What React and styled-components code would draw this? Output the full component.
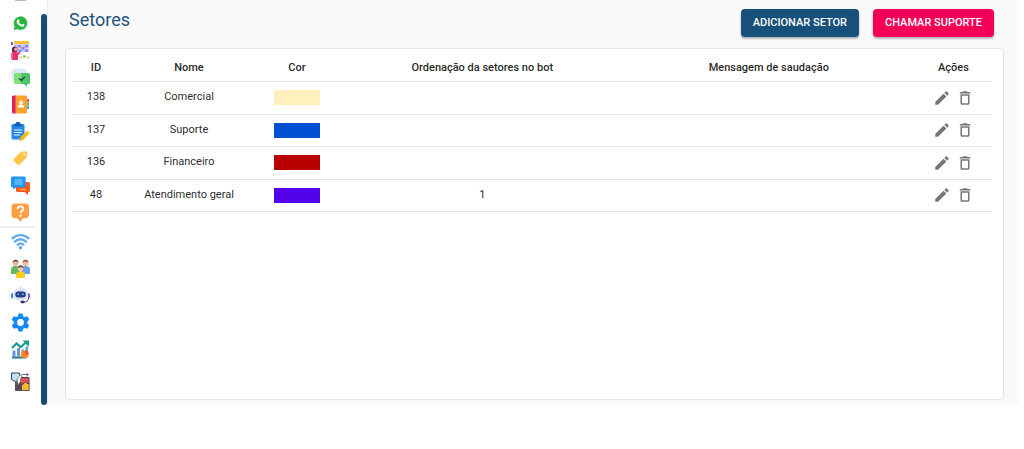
import React from "react";
import styled, { createGlobalStyle } from "styled-components";
import { MdEdit, MdDeleteOutline } from "react-icons/md";

const GlobalStyle = createGlobalStyle`
  *, *::before, *::after { box-sizing: border-box; }
  body {
    margin: 0;
    background: #fff;
    color: rgba(0, 0, 0, 0.87);
    font-family: Roboto, "Liberation Sans", sans-serif;
    font-size: 11px;
    line-height: 16px;
  }
`;

const Shell = styled.div`
  display: flex;
  min-height: calc(100vh - 44px);
  margin-right: 5px;
`;

const Sidebar = styled.aside`
  display: flex;
  flex: none;
  width: 48px;
  border-right: 1px solid #ececec;
`;

const Nav = styled.nav`
  flex: 1;
`;

const NavLink = styled.a`
  display: flex;
  align-items: center;
  height: ${(p) => (p.$tall ? 36 : 27)}px;
  padding-left: 11px;
`;

const Clipped = styled.div`
  display: flex;
  height: 10px;
  padding-left: 15px;

  &::before {
    content: "";
    width: 11px;
    height: 1px;
    background: #b4b8c4;
  }
`;

const Divider = styled.hr`
  height: 2px;
  margin: 0 6px 0 0;
  border: 0;
  background: #ececec;
`;

const ScrollThumb = styled.span`
  flex: none;
  width: 6px;
  margin-top: 14px;
  border-radius: 3px;
  background: #164d72;
`;

const Main = styled.main`
  display: flex;
  flex: 1;
  flex-direction: column;
  gap: 10px;
  min-width: 0;
  padding: 9px 15px 5px 17px;
  background: #fafafa;
`;

const Header = styled.header`
  display: flex;
  justify-content: space-between;
  height: 29px;
  padding: 0 10px 0 4px;
`;

const Title = styled.h1`
  margin: 0;
  color: #1a5480;
  font-size: 18px;
  font-weight: 400;
  line-height: 22px;
`;

const Actions = styled.div`
  display: flex;
  gap: 14px;
`;

const Button = styled.button`
  height: 28px;
  padding: 0 12px;
  border: 0;
  border-radius: 4px;
  background: ${(p) => (p.$accent ? "#f50057" : "#17507a")};
  box-shadow: 0 2px 2px rgba(0, 0, 0, 0.2), 0 1px 3px rgba(0, 0, 0, 0.14);
  color: #fff;
  font: 500 11px/16px Roboto, "Liberation Sans", sans-serif;
  text-transform: uppercase;
  white-space: nowrap;
  cursor: pointer;
`;

const Card = styled.section`
  flex: 1;
  padding: 6px 11px 6px 6px;
  border: 1px solid #e4e4e4;
  border-radius: 4px;
  background: #fff;
`;

const Table = styled.table`
  width: 100%;
  border-collapse: separate;
  border-spacing: 0;
  table-layout: fixed;
  text-align: center;
`;

const Th = styled.th`
  width: ${(p) => (p.$width ? `${p.$width}px` : "auto")};
  height: 27px;
  padding: 0 11px 0 5px;
  border-bottom: 1px solid #e0e0e0;
  font-weight: 500;
  white-space: nowrap;

  &:last-child { padding: 0 4px; }
`;

const Row = styled.tr`
  height: 33px;

  &:nth-child(even) { height: 32px; }
`;

const Td = styled.td`
  padding: 0 11px 2px 5px;
  border-bottom: 1px solid #e0e0e0;
  white-space: nowrap;

  &:last-child { padding: 0 4px 1px; }
`;

const Swatch = styled.span`
  display: block;
  width: 46px;
  height: 15px;
  margin: 1px auto 0;
  background: ${(p) => p.$color};
`;

const RowActions = styled.div`
  display: flex;
  justify-content: center;
  gap: 5px;
`;

const IconButton = styled.button`
  display: flex;
  padding: 0;
  border: 0;
  background: none;
  color: #757575;
  font-size: 18px;
  cursor: pointer;
`;

const Icon = ({ children }) => (
  <svg width="19" height="19" viewBox="0 0 19 19" aria-hidden="true">
    {children}
  </svg>
);

const WhatsApp = () => (
  <Icon>
    <path d="M2 16.500l1.100-3.800A7.200 7.200 0 1 1 6 15.600z" fill="#d8dcd9" />
    <path d="M2.800 15.800l1-3.400a6.600 6.600 0 1 1 2.500 2.500z" fill="#25b83d" />
    <path d="M6.800 5.600c.5-.5 1-.3 1.200.2l.6 1.300c.1.400-.6 1-.7 1.200.6 1.200 1.500 2 2.700 2.500.4-.2.8-1.100 1.200-1l1.500.7c.4.300.1 1.400-.4 1.800-.8.700-2.100.6-3.700-.2-1.800-.9-3.300-2.800-3.500-4.200-.1-1 .5-1.800 1.100-2.300z" fill="#fff" />
  </Icon>
);

const Planning = () => (
  <Icon>
    <path d="M3 1h15v10H3z" fill="#cfcbf6" />
    <path d="M3 0h15v3H3z" fill="#fbc02d" />
    <path d="M7 4h3v2.500H7zM14 4h3v2.500h-3zM10.500 6h3v2.500h-3zM7.500 8.500h3V11h-3zM14 8.500h3V11h-3z" fill="#8c84e0" />
    <path d="M0 1h2v3H0z" fill="#5b6be0" />
    <path d="M1 7.500C1 5 6 4.500 6.500 7.500L6 11H1z" fill="#4b2a55" />
    <circle cx="4.800" cy="8.300" r="1.700" fill="#f6a58c" />
    <path d="M1 11.500c1.500-1.300 4-1.300 5 .3l2.800-1 .6 1.500L7 14.200v4.800H1z" fill="#ec2f6e" />
    <path d="M0 12h2v6H0z" fill="#f06292" />
    <circle cx="10" cy="16.500" r="1" fill="#f9b233" />
    <circle cx="13.300" cy="15.500" r="1.300" fill="#67bb55" />
    <circle cx="17" cy="16.500" r="1" fill="#f9b233" />
  </Icon>
);

const ChatCheck = () => (
  <Icon>
    <path d="M2.500.5h10A2.500 2.500 0 0 1 15 3v8H4l-3 2V9L0 5z" fill="#dce9fb" />
    <path d="M4.500 5H11v11H4.500A1.500 1.500 0 0 1 3 14.500v-8A1.500 1.500 0 0 1 4.500 5z" fill="#7fe07a" />
    <path d="M10 5h7.500A1.500 1.500 0 0 1 19 6.500v8a1.500 1.500 0 0 1-1.500 1.500H16v2.500L12.500 16H10z" fill="#4cc46b" />
    <path d="M8 10.500l2.200 1.800L13.800 9" fill="none" stroke="#1e4631" strokeWidth="1.500" />
  </Icon>
);

const Contacts = () => (
  <Icon>
    <path d="M15 4h3v3h-3z" fill="#ef5350" />
    <path d="M15 7.500h3v3h-3z" fill="#43b883" />
    <path d="M15 11h3v3h-3z" fill="#42a5f5" />
    <path d="M4 .5h10.500A1.500 1.500 0 0 1 16 2v15a1.500 1.500 0 0 1-1.500 1.500H4z" fill="#ffa12f" />
    <path d="M2.500.5h2v18h-2A1.500 1.500 0 0 1 1 17V2A1.500 1.500 0 0 1 2.500.5z" fill="#dc1f62" />
    <circle cx="10" cy="7.500" r="1.900" fill="#fff" />
    <path d="M7 12.500V11l2-1.500h2l2 1.500v1.500z" fill="#fff" />
  </Icon>
);

const ClipboardEdit = () => (
  <Icon>
    <rect x=".5" y="2" width="13" height="15.500" rx="1.500" fill="#2689ea" />
    <path d="M3.500 1.500H5a2 2 0 0 1 4 0h1.500v3h-7z" fill="#1260b8" />
    <path d="M3 8h8M3 10.500h8M3 13h6" stroke="#e3f1ff" strokeWidth="1.200" />
    <path d="M15.500 9l3 2.500-6.500 6.500-3.500 1 .8-3.500z" fill="#fbb912" />
    <path d="M16.500 8.500l2.500 2-1 1.200-2.600-2.200z" fill="#ffd65a" />
  </Icon>
);

const Tag = () => (
  <Icon>
    <path d="M10 2.800L14.500 2.200A1.500 1.500 0 0 1 16.200 4l-.6 4.400-7 7.200a1.500 1.500 0 0 1-2.200 0L2.800 12a1.500 1.500 0 0 1 0-2.100z" fill="#fcc543" />
    <circle cx="13.300" cy="5.200" r="1.100" fill="#fff" />
  </Icon>
);

const Conversations = () => (
  <Icon>
    <path d="M8 6h9.500A1.500 1.500 0 0 1 19 7.500v7a1.500 1.500 0 0 1-1.500 1.500H17v3L13.500 16H6.500A1.500 1.500 0 0 1 5 14.500V9z" fill="#fb5a1c" />
    <path d="M2 .5h11a1.700 1.700 0 0 1 1.700 1.700v7.300a1.700 1.700 0 0 1-1.700 1.700H5.500L2 13.500v-2.300A1.700 1.700 0 0 1 0 9.500V2.200A1.700 1.700 0 0 1 2 .5z" fill="#1e96f7" />
    <path d="M3.500 4h8M3.500 6h8M3.500 8h8" stroke="#8fd2ff" strokeWidth="1" />
    <path d="M8 13.500h7" stroke="#ffb03d" strokeWidth="1.300" />
  </Icon>
);

const Help = () => (
  <Icon>
    <path d="M4 .5h10.500A3.800 3.800 0 0 1 18 4.300v7.200a3.800 3.800 0 0 1-3.500 3.800H12l-2.700 3.500-2.700-3.500H4A3.800 3.800 0 0 1 .5 11.500V4.300A3.800 3.800 0 0 1 4 .5z" fill="#ff9f43" />
    <path d="M6.500 6.200c.1-3.800 5.800-3.600 5.800-.3 0 2-2.700 2-2.700 4.400" fill="none" stroke="#fff" strokeWidth="1.900" />
    <circle cx="9.500" cy="12.800" r="1.200" fill="#fff" />
  </Icon>
);

const Wifi = () => (
  <Icon>
    <path d="M1.500 6.300c4.500-4.300 11.500-4.300 16 0M4 9.700c3.200-3.200 7.800-3.200 11 0M6.700 12.700c1.700-1.500 3.900-1.500 5.600 0" fill="none" stroke="#64adee" strokeWidth="2.400" strokeLinecap="round" />
    <circle cx="9.500" cy="15.800" r="1.700" fill="#5ba6ea" />
  </Icon>
);

const Team = () => (
  <Icon>
    <circle cx="4.500" cy="4" r="2.900" fill="#f3b69a" />
    <path d="M1.500 3.800C1.300-.3 7.800-.3 7.500 3.800L6 2.500H3z" fill="#54484c" />
    <circle cx="14.500" cy="4" r="2.900" fill="#f3b69a" />
    <path d="M11.500 3.800c-.2-4.100 6.300-4.100 6 0L16 2.500h-3z" fill="#8a4f3c" />
    <path d="M0 15v-4.500C0 7.500 3 7 4.500 7S9 7.500 9 10.500V15z" fill="#63b865" />
    <path d="M10 15v-4.500C10 7.500 13 7 14.500 7s4.500.5 4.500 3.500V15z" fill="#6a9fe8" />
    <path d="M5 19v-3.500c0-2.500 2.500-3.300 4.500-3.300s4.500.8 4.500 3.300V19z" fill="#f6cf1e" />
    <circle cx="9.500" cy="9.700" r="2.700" fill="#f7c3a6" />
    <path d="M6.700 9.300c-.2-4 5.800-4 5.600 0L11 8.200H8z" fill="#65463d" />
  </Icon>
);

const Bot = () => (
  <Icon>
    <path d="M9.500.5v3" stroke="#c9d1ef" strokeWidth="1.500" />
    <path d="M2 7v5.500A1.800 1.800 0 0 1 0 11V8.500A1.800 1.800 0 0 1 2 7z" fill="#3f83ea" />
    <path d="M17 7a1.800 1.800 0 0 1 2 1.500V11a1.800 1.800 0 0 1-2 1.500z" fill="#7157e2" />
    <rect x="2.500" y="2.500" width="14" height="12" rx="5" fill="#dbe1f7" />
    <rect x="4.300" y="5.500" width="10.500" height="6" rx="3" fill="#253a83" />
    <circle cx="7.300" cy="8.300" r="1" fill="#69c1ff" />
    <circle cx="11.800" cy="8.300" r="1" fill="#69c1ff" />
    <path d="M17.500 12c0 2.500-1.500 4-5 4" fill="none" stroke="#433a78" strokeWidth="1" />
    <rect x="9.500" y="14.700" width="4" height="2.500" rx="1.200" fill="#25315f" />
  </Icon>
);

const Settings = () => (
  <Icon>
    <path
      d="M7.500.5h4l.6 2.700 1.600.9 2.600-.8 2 3.400-2 1.900v1.800l2 1.900-2 3.400-2.600-.8-1.600.9-.6 2.700h-4l-.6-2.700-1.600-.9-2.600.8-2-3.400 2-1.900V8.600l-2-1.900 2-3.400 2.600.8 1.600-.9zM9.500 6.100a3.400 3.400 0 1 0 0 6.800 3.400 3.400 0 0 0 0-6.800z"
      fill="#1688f5"
      fillRule="evenodd"
    />
  </Icon>
);

const Reports = () => (
  <Icon>
    <path d="M1.500 10.500h3v6h-3zM6 8h3v8.500H6zM10.500 9.500h2.500v7h-2.500zM14.500 6.500H17V13h-2.500z" fill="#6d93e3" />
    <path d="M1 8l4.500-4.500 4 3.500L15 2.500" fill="none" stroke="#159b91" strokeWidth="2.200" />
    <path d="M11.500.5H18V7z" fill="#159b91" />
    <path d="M1 16.500h14v2H1z" fill="#237b93" />
    <circle cx="13.800" cy="14.300" r="3.900" fill="#f58a2a" />
    <path d="M13.800 14.300v-3.900a3.900 3.900 0 0 1 3.900 3.900z" fill="#e95332" />
  </Icon>
);

const Integrations = () => (
  <Icon>
    <path d="M4.500 10h6v8.500h-6z" fill="#5d4a52" stroke="#443b42" strokeWidth=".8" />
    <path d="M.5 1h8v7l-4 1.500-4-2z" fill="#c3e3f3" stroke="#3e4650" strokeWidth="1" />
    <path d="M9.500 5.500H18v6.500H9.500z" fill="#e44e58" stroke="#493a42" strokeWidth="1" />
    <path d="M10.500 18.500v-5.500l2.500-1.500 1.500-2 1.500 2h2.200v7z" fill="#f6ba35" stroke="#493a42" strokeWidth=".8" />
    <path d="M6 7l3-4 2 1-1.500 2.800V10L7 12.500z" fill="#fff" stroke="#6d6d75" strokeWidth=".8" />
    <path d="M10.500 2.500H17M15.500 1l2 1.500-2 1.500" fill="none" stroke="#63666e" strokeWidth="1" />
  </Icon>
);

const primaryLinks = [
  ["WhatsApp", WhatsApp],
  ["Kanban", Planning],
  ["Respostas rápidas", ChatCheck],
  ["Contatos", Contacts],
  ["Tarefas", ClipboardEdit],
  ["Etiquetas", Tag],
  ["Chat interno", Conversations],
  ["Ajuda", Help],
];

const adminLinks = [
  ["Conexões", Wifi],
  ["Usuários", Team],
  ["Chatbot", Bot],
  ["Configurações", Settings],
  ["Relatórios", Reports],
  ["Integrações", Integrations],
];

const sectors = [
  { id: 138, name: "Comercial", color: "#fff1bd", order: "" },
  { id: 137, name: "Suporte", color: "#004fd2", order: "" },
  { id: 136, name: "Financeiro", color: "#b80000", order: "" },
  { id: 48, name: "Atendimento geral", color: "#5300eb", order: "1" },
];

export default function App() {
  return (
    <>
      <GlobalStyle />
      <Shell>
        <Sidebar>
          <Nav>
            <Clipped />
            {primaryLinks.map(([label, Glyph]) => (
              <NavLink key={label} href="#" aria-label={label}>
                <Glyph />
              </NavLink>
            ))}
            <Divider />
            {adminLinks.map(([label, Glyph]) => (
              <NavLink key={label} href="#" aria-label={label} $tall={Glyph === Integrations}>
                <Glyph />
              </NavLink>
            ))}
          </Nav>
          <ScrollThumb />
        </Sidebar>
        <Main>
          <Header>
            <Title>Setores</Title>
            <Actions>
              <Button type="button">Adicionar setor</Button>
              <Button type="button" $accent>Chamar suporte</Button>
            </Actions>
          </Header>
          <Card>
            <Table>
              <thead>
                <tr>
                  <Th $width={54}>ID</Th>
                  <Th $width={132}>Nome</Th>
                  <Th $width={84}>Cor</Th>
                  <Th>Ordenação da setores no bot</Th>
                  <Th>Mensagem de saudação</Th>
                  <Th $width={77}>Ações</Th>
                </tr>
              </thead>
              <tbody>
                {sectors.map((s) => (
                  <Row key={s.id}>
                    <Td>{s.id}</Td>
                    <Td>{s.name}</Td>
                    <Td><Swatch $color={s.color} /></Td>
                    <Td>{s.order}</Td>
                    <Td />
                    <Td>
                      <RowActions>
                        <IconButton type="button" aria-label={`Editar ${s.name}`}><MdEdit /></IconButton>
                        <IconButton type="button" aria-label={`Excluir ${s.name}`}><MdDeleteOutline /></IconButton>
                      </RowActions>
                    </Td>
                  </Row>
                ))}
              </tbody>
            </Table>
          </Card>
        </Main>
      </Shell>
    </>
  );
}
